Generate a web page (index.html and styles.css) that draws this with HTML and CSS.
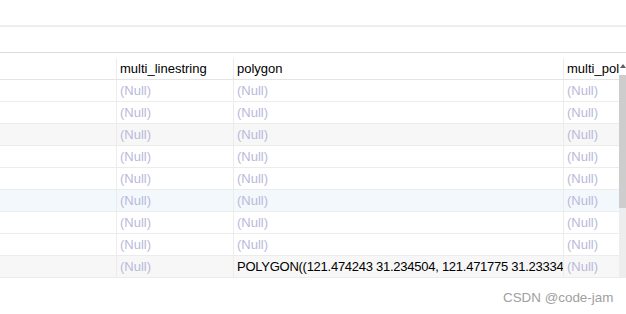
FILE: index.html
```html
<!DOCTYPE html>
<html lang="en">
<head>
    <meta charset="UTF-8">
    <title>Result grid</title>
    <link rel="stylesheet" href="styles.css">
</head>
<body>
    <div class="toolbar"></div>
    <div class="toolbar-gap"></div>

    <div class="grid-wrap">
        <div class="grid">
            <div class="row header">
                <div class="cell"></div>
                <div class="cell">multi_linestring</div>
                <div class="cell">polygon</div>
                <div class="cell">multi_polygon</div>
            </div>
            <div class="row">
                <div class="cell"></div>
                <div class="cell null">(Null)</div>
                <div class="cell null">(Null)</div>
                <div class="cell null">(Null)</div>
            </div>
            <div class="row">
                <div class="cell"></div>
                <div class="cell null">(Null)</div>
                <div class="cell null">(Null)</div>
                <div class="cell null">(Null)</div>
            </div>
            <div class="row alt">
                <div class="cell"></div>
                <div class="cell null">(Null)</div>
                <div class="cell null">(Null)</div>
                <div class="cell null">(Null)</div>
            </div>
            <div class="row">
                <div class="cell"></div>
                <div class="cell null">(Null)</div>
                <div class="cell null">(Null)</div>
                <div class="cell null">(Null)</div>
            </div>
            <div class="row">
                <div class="cell"></div>
                <div class="cell null">(Null)</div>
                <div class="cell null">(Null)</div>
                <div class="cell null">(Null)</div>
            </div>
            <div class="row hover">
                <div class="cell"></div>
                <div class="cell null">(Null)</div>
                <div class="cell null">(Null)</div>
                <div class="cell null">(Null)</div>
            </div>
            <div class="row">
                <div class="cell"></div>
                <div class="cell null">(Null)</div>
                <div class="cell null">(Null)</div>
                <div class="cell null">(Null)</div>
            </div>
            <div class="row">
                <div class="cell"></div>
                <div class="cell null">(Null)</div>
                <div class="cell null">(Null)</div>
                <div class="cell null">(Null)</div>
            </div>
            <div class="row alt">
                <div class="cell"></div>
                <div class="cell null">(Null)</div>
                <div class="cell geom">POLYGON((121.474243 31.234504, 121.471775 31.233348, 121.472636 31.231497, 121.474243 31.234504))</div>
                <div class="cell null">(Null)</div>
            </div>
        </div>

        <div class="scrollbar">
            <div class="scroll-arrow"></div>
            <div class="scroll-thumb"></div>
            <div class="scroll-track"></div>
        </div>
    </div>

    <div class="watermark">CSDN @code-jam</div>
</body>
</html>
```

FILE: styles.css
```css
* {
    margin: 0;
    padding: 0;
    box-sizing: border-box;
}

body {
    font-family: 'Liberation Sans', Arial, sans-serif;
    font-size: 13px;
    color: #000;
    background: #fff;
    width: 626px;
    height: 314px;
    overflow: hidden;
    position: relative;
}

.toolbar {
    height: 25px;
    border-bottom: 2px solid #eeeeee;
    box-sizing: content-box;
}

.toolbar-gap {
    height: 25px;
}

.grid-wrap {
    display: flex;
    border-top: 1px solid #dcdcdc;
}

.grid {
    width: 619px;
    overflow: hidden;
}

.row {
    display: grid;
    grid-template-columns: 117px 117px 330px 60px;
    height: 22px;
    border-bottom: 1px solid #ececec;
    white-space: nowrap;
}

.row.alt {
    background: #f7f7f7;
}

.row.hover {
    background: #f3f8fd;
}

.row.header {
    height: 27px;
    padding-top: 5px;
    border-bottom-color: #e4e4e4;
}

.cell {
    border-right: 1px solid #ececec;
    padding-left: 3px;
    line-height: 21px;
    overflow: hidden;
    text-overflow: clip;
}

.cell.null {
    color: #b9b9da;
}

.cell.geom {
    letter-spacing: -0.26px;
}

.scrollbar {
    width: 7px;
    display: flex;
    flex-direction: column;
    height: 225px;
}

.scroll-arrow {
    height: 22px;
    position: relative;
}

.scroll-arrow::after {
    content: '';
    position: absolute;
    left: 1px;
    top: 11px;
    border-left: 3px solid transparent;
    border-right: 3px solid transparent;
    border-bottom: 4px solid #606060;
}

.scroll-thumb {
    height: 133px;
    background: #cdcdcd;
}

.scroll-track {
    flex: 1;
    background: #ededed;
}

.watermark {
    position: absolute;
    left: 503px;
    top: 290px;
    font-size: 13.4px;
    color: #a0a0a0;
}
```
